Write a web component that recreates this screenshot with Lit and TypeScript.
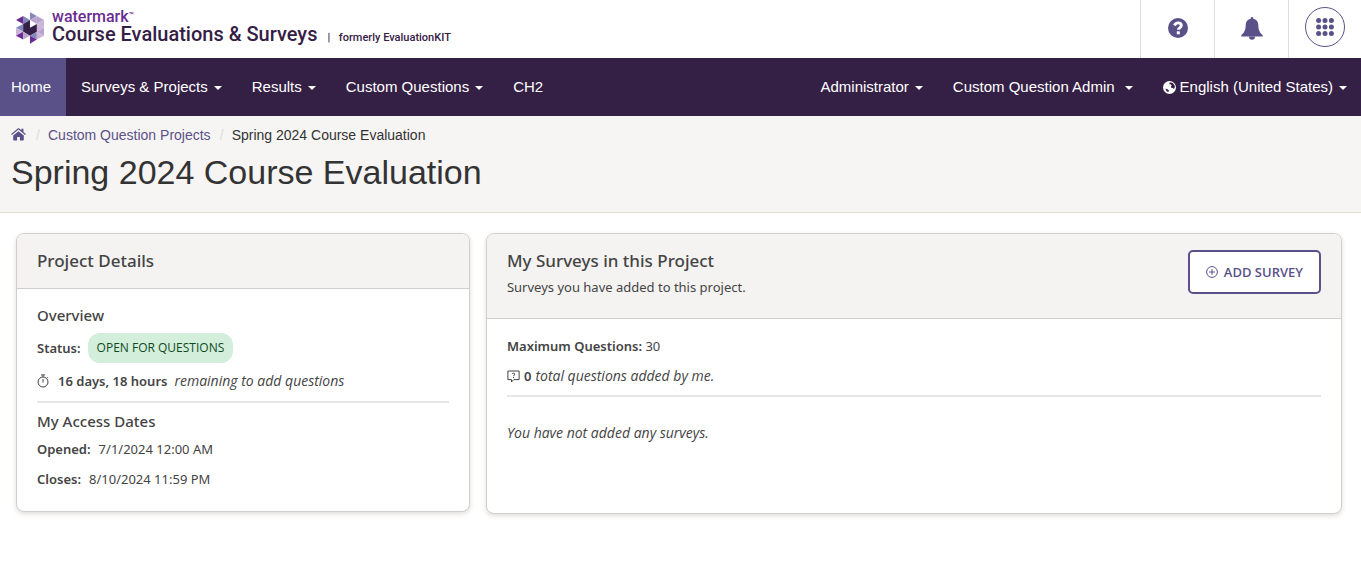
import { LitElement, html, css, svg } from "lit";
import { customElement, property } from "lit/decorators.js";

interface NavItem {
  label: string;
  caret?: boolean;
  active?: boolean;
  globe?: boolean;
  wide?: boolean;
}

const leftNav: NavItem[] = [
  { label: "Home", active: true },
  { label: "Surveys & Projects", caret: true },
  { label: "Results", caret: true },
  { label: "Custom Questions", caret: true },
  { label: "CH2" },
];

const rightNav: NavItem[] = [
  { label: "Administrator", caret: true },
  { label: "Custom Question Admin", caret: true, wide: true },
  { label: "English (United States)", caret: true, globe: true },
];

const facets: [string, string][] = [
  ["43,0 43,24 64,12", "#8487bd"],
  ["22,12 43,24 22,36", "#8487bd"],
  ["0,24 22,12 22,36", "#6b2c91"],
  ["43,24 64,12 64,36", "#b9a3cf"],
  ["64,12 86,24 64,36", "#b9a3cf"],
  ["86,24 86,48 64,36", "#cbb4d9"],
  ["0,48 22,36 22,60", "#8487bd"],
  ["86,48 64,36 64,60", "#cbb4d9"],
  ["86,48 86,72 64,60", "#b9a3cf"],
  ["22,36 43,24 43,48 64,36 64,60 43,72 22,60", "#35204a"],
  ["0,48 22,60 0,72", "#c9b3d8"],
  ["0,72 22,60 22,84", "#6b2c91"],
  ["22,60 43,72 22,84", "#b9a3cf"],
  ["43,72 64,60 64,84", "#8487bd"],
  ["64,60 86,72 64,84", "#cbb4d9"],
  ["43,72 43,97 64,84", "#6b2c91"],
];

const icons = {
  mark: svg`<svg viewBox="0 0 86 97" width="28" height="32" aria-hidden="true">
    ${facets.map(([p, c]) => svg`<polygon points=${p} fill=${c} />`)}</svg>`,
  help: svg`<svg viewBox="0 0 20 20" width="20" height="20" aria-hidden="true">
    <circle cx="10" cy="10" r="10" fill="currentColor" />
    <path d="M6.500 7.600C7.200 5.700 8.400 4.900 10 4.900c1.900 0 3.300 1.100 3.300 2.700 0 2.200-2.900 2.200-2.900 4.200" fill="none" stroke="#fff" stroke-width="2.900" />
    <rect x="8.800" y="13.300" width="3" height="3" fill="#fff" /></svg>`,
  bell: svg`<svg viewBox="0 0 22 23" width="22" height="23" aria-hidden="true">
    <path fill="currentColor" d="M11 0c.8 0 1.3.6 1.3 1.4v.4c3.1.6 5 3 5 6 0 5.200 1.500 8.200 4.400 10.200v1.600H.3V18c2.900-2 4.400-5 4.400-10.200 0-3 1.900-5.400 5-6v-.4C9.700.6 10.200 0 11 0zM8 19.800h6a3 3 0 0 1-6 0z" /></svg>`,
  grid: svg`<svg viewBox="0 0 18 18" width="18" height="18" aria-hidden="true">
    ${[2.6, 9, 15.4].map((y) => [2.6, 9, 15.4].map((x) => svg`<circle cx=${x} cy=${y} r="2.5" fill="currentColor" />`))}</svg>`,
  globe: svg`<svg viewBox="0 0 14 14" width="13" height="13" aria-hidden="true">
    <circle cx="7" cy="7" r="7" fill="#fff" />
    <path fill="#352045" d="M7.400 1.400 10.400 2.200 12.400 4.600 12.800 6.400 11.800 8.600 10.400 7.600 9 7.400 8.400 5.800 9.400 4.600 8 3.600 6.600 3.400z M2.600 8 4.800 8.800 6.400 10 5.800 11.800 3.800 11z" /></svg>`,
  home: svg`<svg viewBox="0 0 15 13" width="15" height="13" aria-hidden="true">
    <path fill="currentColor" d="M7.500 3.200 12.800 7.600v4.200c0 .4-.3.700-.7.700H8.900V8.900H6.100v3.600H2.900c-.4 0-.7-.3-.7-.7V7.600zM7.500.3c.4 0 .7.100 1 .4l1.900 1.600V.8h2v3.100L14.900 6l-.7.900L7.500 1.500.8 6.900.1 6 6.500.7c.3-.3.6-.4 1-.4z" /></svg>`,
  timer: svg`<svg viewBox="0 0 12 14" width="12" height="14" aria-hidden="true" fill="none" stroke="currentColor">
    <circle cx="6" cy="8" r="5" /><path d="M4 .9h4M6 1v2M6 5v3.500M10 3.200l1 1" /></svg>`,
  chat: svg`<svg viewBox="0 0 13 13" width="13" height="13" aria-hidden="true" fill="none" stroke="currentColor">
    <path d="M.9 1h11.200v8.600H6.800L4.500 12V9.600H.9z" /><path d="M5.100 4.200c.1-1.500 2.800-1.400 2.700 0 0 .9-1.300.8-1.300 1.900M6.500 7v1" /></svg>`,
  plus: svg`<svg viewBox="0 0 12 12" width="12" height="12" aria-hidden="true" fill="none" stroke="currentColor">
    <circle cx="6" cy="6" r="5.400" /><path d="M6 3v6M3 6h6" /></svg>`,
};

@customElement("site-header")
class SiteHeader extends LitElement {
  static styles = css`
    :host { display: flex; justify-content: space-between; height: 58px; background: #fff; }
    .brand { display: flex; align-items: flex-start; padding: 12px 0 0 16px; gap: 8px; text-decoration: none; color: #352045; font-family: Roboto, sans-serif; }
    .words { display: flex; flex-direction: column; }
    .name { display: flex; font-size: 16px; line-height: 10px; font-weight: 500; color: #6b2c91; }
    .tm { font-size: 8px; line-height: 8px; }
    .product { font-size: 20px; line-height: 24px; font-weight: 500; white-space: nowrap; }
    .former { font-size: 11px; font-weight: 500; padding-left: 5px; }
    .bar { padding-right: 6px; }
    .tools { display: flex; }
    button { display: flex; align-items: center; justify-content: center; box-sizing: border-box; width: 74px; padding: 0 0 2px; border: 0; border-left: 1px solid #dcdcd8; background: none; color: #5a5189; font: inherit; }
    .apps { width: 73px; padding: 0 0 4px; }
    .ring { display: flex; align-items: center; justify-content: center; box-sizing: border-box; width: 40px; height: 40px; border: 1px solid #5a5189; border-radius: 50%; }
  `;
  render() {
    return html`
      <a class="brand" href="#">
        ${icons.mark}
        <span class="words">
          <span class="name">watermark<span class="tm">™</span></span>
          <span class="product">Course Evaluations &amp; Surveys <span class="former"><span class="bar">|</span> formerly EvaluationKIT</span></span>
        </span>
      </a>
      <div class="tools">
        <button aria-label="Help">${icons.help}</button>
        <button aria-label="Notifications">${icons.bell}</button>
        <button class="apps" aria-label="Applications"><span class="ring">${icons.grid}</span></button>
      </div>`;
  }
}

@customElement("nav-bar")
class NavBar extends LitElement {
  static styles = css`
    :host { display: block; }
    nav { display: flex; justify-content: space-between; height: 58px; background: #352045; }
    ul { display: flex; margin: 0; padding: 0; list-style: none; }
    li { display: flex; }
    a { display: flex; align-items: center; padding: 0 15px; color: #fff; font-size: 15px; line-height: 20px; text-decoration: none; white-space: nowrap; }
    .active { padding-left: 11px; background: #5a5189; }
    .caret { margin: 2px 0 0 6px; border: 4px solid transparent; border-top-color: #fff; border-bottom: 0; }
    .wide .caret { margin-left: 10px; }
    .globe { display: flex; margin-right: 4px; }
    ul:last-child li:last-child a { padding-right: 14px; }
  `;
  item(i: NavItem) {
    return html`<li><a href="#" class="${i.active ? "active" : ""} ${i.wide ? "wide" : ""}">
      ${i.globe ? html`<span class="globe">${icons.globe}</span>` : ""}<span>${i.label}</span>${i.caret ? html`<span class="caret"></span>` : ""}</a></li>`;
  }
  render() {
    return html`<nav aria-label="Main">
      <ul>${leftNav.map((i) => this.item(i))}</ul>
      <ul>${rightNav.map((i) => this.item(i))}</ul>
    </nav>`;
  }
}

@customElement("page-title")
class PageTitle extends LitElement {
  static styles = css`
    :host { display: block; box-sizing: border-box; height: 97px; padding: 9px 11px 0; background: #f6f5f3; border-bottom: 1px solid #deded4; }
    ol { display: flex; margin: 0; padding: 0; list-style: none; font-size: 14px; line-height: 20px; color: #333; }
    li { display: flex; align-items: center; }
    li + li::before { content: "/"; width: 4px; margin: 0 8px 0 9px; color: #ddd; }
    li:first-child { padding: 0 1px 2px 0; }
    a { display: flex; color: #5a5189; text-decoration: none; }
    h1 { margin: 8px 0 0; font-size: 34px; line-height: 38px; font-weight: 400; color: #333; }
  `;
  render() {
    return html`
      <ol>
        <li><a href="#" aria-label="Home">${icons.home}</a></li>
        <li><a href="#">Custom Question Projects</a></li>
        <li>Spring 2024 Course Evaluation</li>
      </ol>
      <h1>Spring 2024 Course Evaluation</h1>`;
  }
}

const cardStyles = css`
  :host { display: block; border: 1px solid #d2cece; border-radius: 8px; overflow: hidden; background: #fff; box-shadow: 0 2px 5px rgba(60, 50, 40, 0.16); color: #444; font: 13px/20px "Noto Sans", "Open Sans", sans-serif; }
  header { background: #f4f3f2; border-bottom: 1px solid #d2cece; }
  h2 { margin: 0; font-size: 17px; line-height: 24px; font-weight: 500; }
  p { margin: 0; }
  b { font-weight: 600; }
  em { font-family: "Open Sans", sans-serif; font-size: 14px; }
  hr { height: 2px; margin: 0; border: 0; background: #e6e6e6; }
  .body { padding: 0 20px; }
  .row { display: flex; align-items: center; }
`;

@customElement("project-details")
class ProjectDetails extends LitElement {
  static styles = [
    cardStyles,
    css`
      header { padding: 15px 20px; }
      .body { padding-top: 16px; padding-bottom: 22px; }
      h3 { margin: 0; font-size: 15px; line-height: 20px; font-weight: 500; }
      .status { height: 30px; margin-top: 8px; gap: 7px; }
      .pill { padding: 0 9px; border-radius: 12px; background: #d3eedb; color: #0f4a1e; font: 500 12px/30px "Open Sans", sans-serif; }
      .left { margin: 8px 0 10px; gap: 7px; height: 20px; }
      .date { margin-top: 8px; gap: 8px; }
      .date + .date { margin-top: 10px; }
      .icon { display: flex; width: 14px; }
      h3.dates { margin-top: 8px; }
    `,
  ];
  render() {
    return html`
      <header><h2>Project Details</h2></header>
      <div class="body">
        <h3>Overview</h3>
        <p class="row status"><b>Status:</b><span class="pill">OPEN FOR QUESTIONS</span></p>
        <p class="row left"><span class="icon">${icons.timer}</span><b>16 days, 18 hours</b><em>remaining to add questions</em></p>
        <hr />
        <h3 class="dates">My Access Dates</h3>
        <p class="row date"><b>Opened:</b><span>7/1/2024 12:00 AM</span></p>
        <p class="row date"><b>Closes:</b><span>8/10/2024 11:59 PM</span></p>
      </div>`;
  }
}

@customElement("project-surveys")
class ProjectSurveys extends LitElement {
  @property({ type: Number }) max = 30;
  @property({ type: Number }) total = 0;
  static styles = [
    cardStyles,
    css`
      header { display: flex; justify-content: space-between; align-items: flex-start; padding: 16px 20px 21px; }
      header p { margin-top: 5px; }
      h2 { line-height: 22px; }
      button { display: flex; align-items: center; gap: 6px; box-sizing: border-box; height: 44px; padding: 0 16px; border: 2px solid #5a5189; border-radius: 5px; background: #fff; color: #5a5189; font: 600 13px/20px "Open Sans", sans-serif; white-space: nowrap; }
      .body { padding-top: 17px; padding-bottom: 70px; }
      .count { margin: 10px 0 9px; gap: 4px; }
      .icon { display: flex; }
      .none { margin-top: 26px; }
    `,
  ];
  render() {
    return html`
      <header>
        <div><h2>My Surveys in this Project</h2><p>Surveys you have added to this project.</p></div>
        <button type="button">${icons.plus}<span>ADD SURVEY</span></button>
      </header>
      <div class="body">
        <p><b>Maximum Questions:</b> ${this.max}</p>
        <p class="row count"><span class="icon">${icons.chat}</span><b>${this.total}</b><em>total questions added by me.</em></p>
        <hr />
        <p class="none"><em>You have not added any surveys.</em></p>
      </div>`;
  }
}

@customElement("app-root")
class AppRoot extends LitElement {
  static styles = css`
    :host { display: block; min-height: 100vh; background: #fff; font-family: "Liberation Sans", Arial, sans-serif; }
    main { display: grid; grid-template-columns: 35fr 66fr; align-items: start; gap: 16px; padding: 20px 19px 20px 16px; }
  `;
  render() {
    return html`
      <site-header></site-header>
      <nav-bar></nav-bar>
      <page-title></page-title>
      <main>
        <project-details></project-details>
        <project-surveys></project-surveys>
      </main>`;
  }
}
